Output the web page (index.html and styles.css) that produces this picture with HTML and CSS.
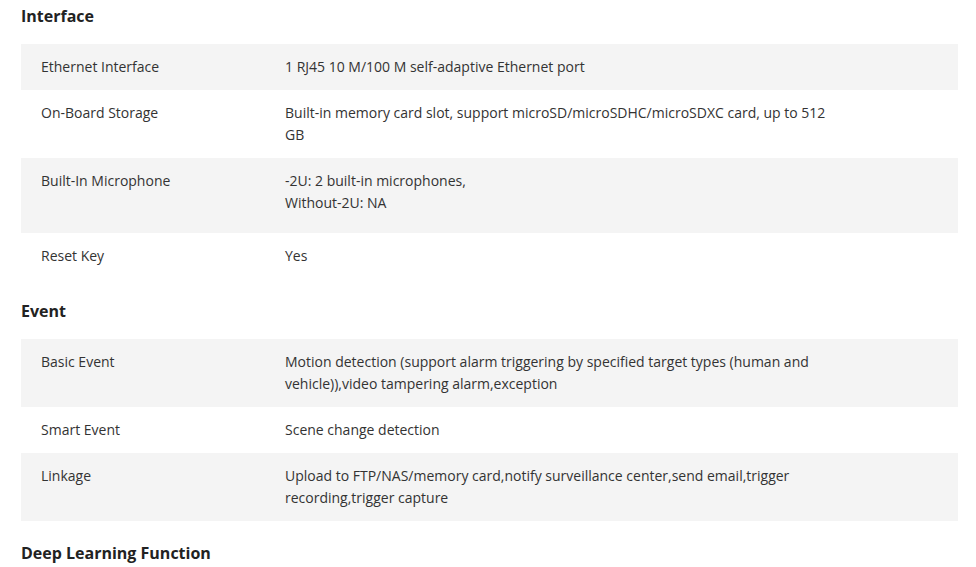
FILE: index.html
```html
<!DOCTYPE html>
<html>
<head>
<meta charset="utf-8">
<link rel="stylesheet" href="styles.css">
</head>
<body>
<div class="page">
  <h3 class="sec-title">Interface</h3>
  <div class="spec-list">
    <div class="row shaded"><div class="label">Ethernet Interface</div><div class="value">1 RJ45 10 M/100 M self-adaptive Ethernet port</div></div>
    <div class="row"><div class="label">On-Board Storage</div><div class="value">Built-in memory card slot, support microSD/microSDHC/microSDXC card, up to 512 GB</div></div>
    <div class="row shaded tall"><div class="label">Built-In Microphone</div><div class="value">-2U: 2 built-in microphones,<br>Without-2U: NA</div></div>
    <div class="row"><div class="label">Reset Key</div><div class="value">Yes</div></div>
  </div>
  <h3 class="sec-title">Event</h3>
  <div class="spec-list">
    <div class="row shaded"><div class="label">Basic Event</div><div class="value">Motion detection (support alarm triggering by specified target types (human and vehicle)),video tampering alarm,exception</div></div>
    <div class="row"><div class="label">Smart Event</div><div class="value">Scene change detection</div></div>
    <div class="row shaded"><div class="label">Linkage</div><div class="value">Upload to FTP/NAS/memory card,notify surveillance center,send email,trigger recording,trigger capture</div></div>
  </div>
  <h3 class="sec-title">Deep Learning Function</h3>
</div>
</body>
</html>
```
FILE: styles.css
```css
html, body {
  margin: 0;
  padding: 0;
  background: #fff;
}
body {
  font-family: "Open Sans", "Liberation Sans", sans-serif;
  color: #333;
}
.page {
  padding: 4px 18px 0 21px;
}
.sec-title {
  margin: 0 0 16px 0;
  font-size: 16px;
  line-height: 24px;
  font-weight: 700;
  color: #222;
}
.spec-list + .sec-title,
.spec-list ~ .sec-title {
  margin-top: 20px;
}
.spec-list {
  display: flex;
  flex-direction: column;
}
.row {
  display: grid;
  grid-template-columns: 244px 553px;
  padding: 12px 0 12px 20px;
  font-size: 14px;
  line-height: 22px;
}
.row.shaded {
  background: #f4f4f4;
}
.row.tall {
  padding-bottom: 19px;
}
.label {
  color: #333;
}
.value {
  color: #333;
}
```
